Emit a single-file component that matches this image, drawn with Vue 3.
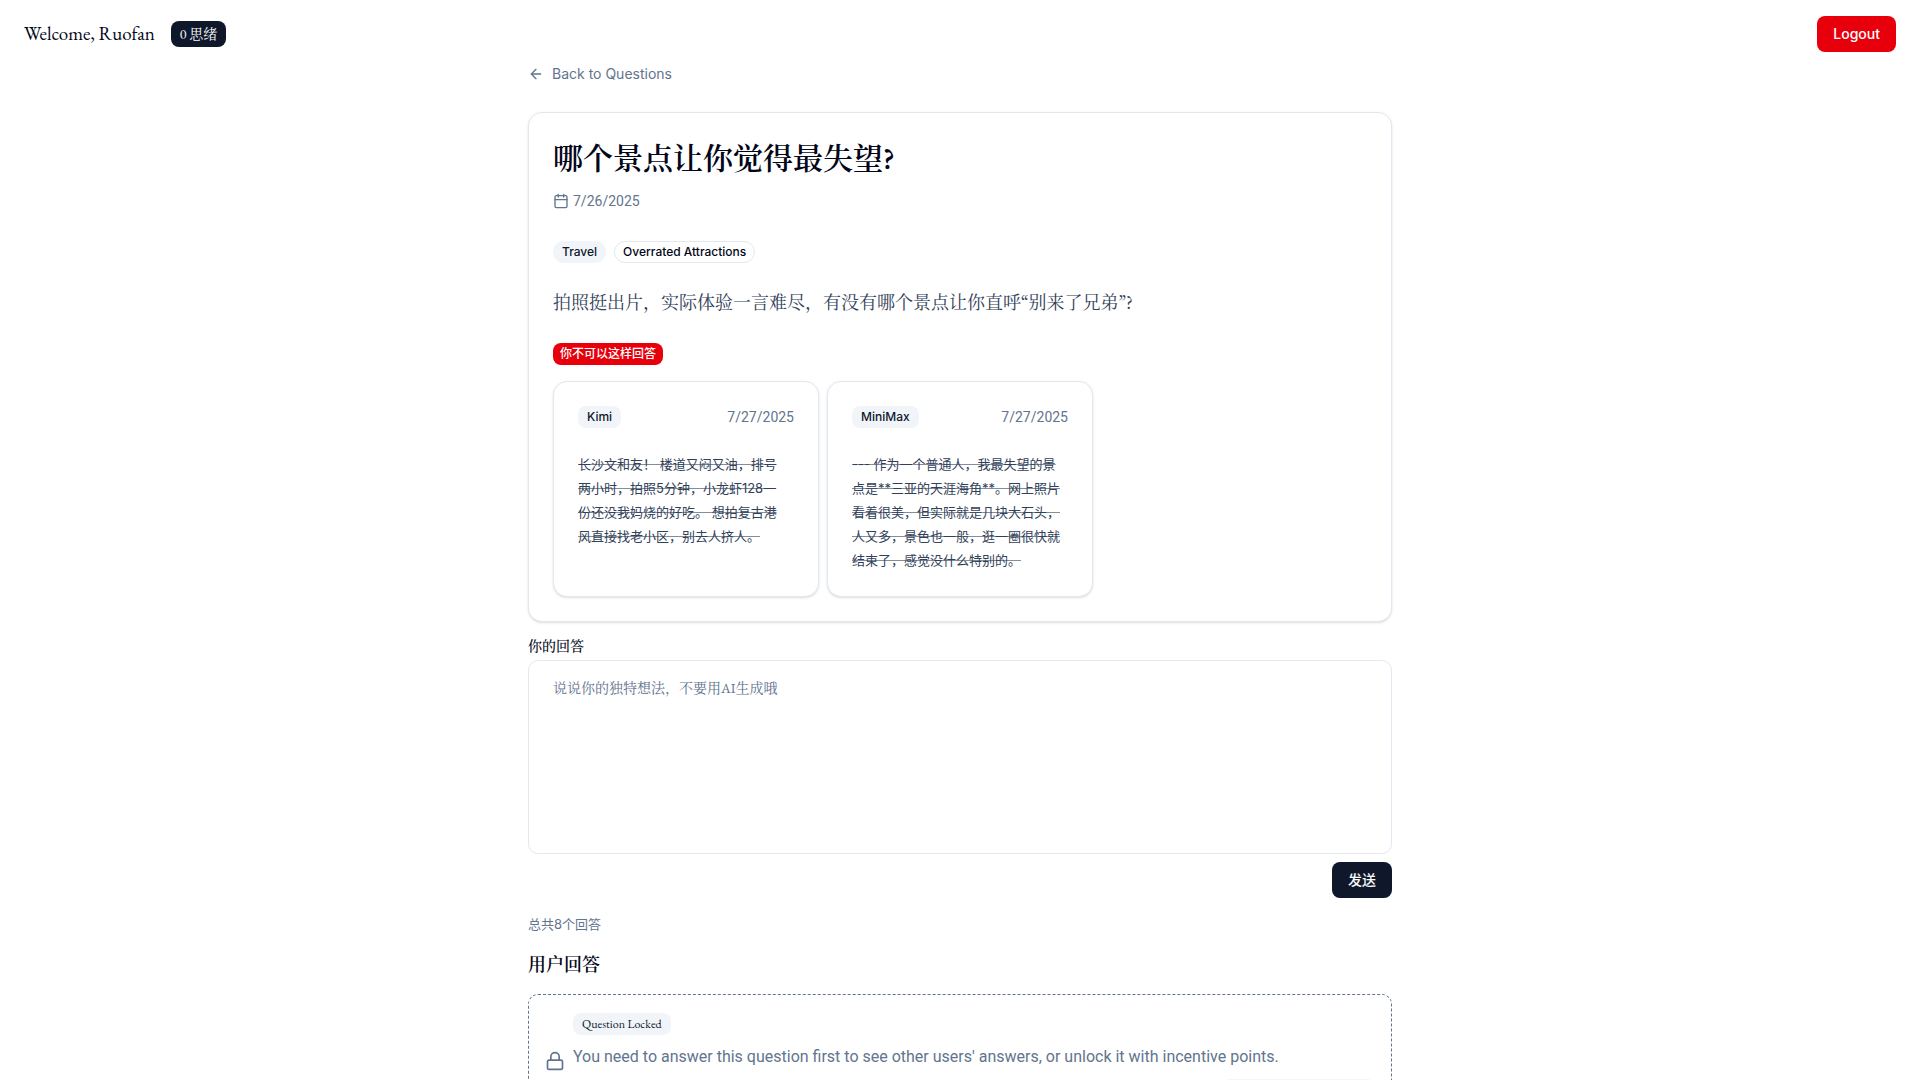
<script setup>
import { ref } from 'vue'

const answer = ref('')

const samples = [
  {
    model: 'Kimi',
    date: '7/27/2025',
    lines: [
      '长沙文和友！ 楼道又闷又油，排号',
      '两小时，拍照5分钟，小龙虾128一',
      '份还没我妈烧的好吃。 想拍复古港',
      '风直接找老小区，别去人挤人。',
    ],
  },
  {
    model: 'MiniMax',
    date: '7/27/2025',
    lines: [
      '--- 作为一个普通人，我最失望的景',
      '点是**三亚的天涯海角**。网上照片',
      '看着很美，但实际就是几块大石头，',
      '人又多，景色也一般，逛一圈很快就',
      '结束了，感觉没什么特别的。',
    ],
  },
]
</script>

<template>
  <div class="page">
    <header class="topbar">
      <div class="user">
        <span class="welcome">Welcome, Ruofan</span>
        <span class="points">0 思绪</span>
      </div>
      <button type="button" class="btn btn-danger">Logout</button>
    </header>

    <main class="content">
      <a href="#" class="back">
        <svg class="icon-sm" viewBox="0 0 24 24" aria-hidden="true">
          <path d="m12 19-7-7 7-7" />
          <path d="M19 12H5" />
        </svg>
        <span>Back to Questions</span>
      </a>

      <article class="card">
        <h1 class="title">哪个景点让你觉得最失望?</h1>
        <div class="meta">
          <svg class="icon-sm" viewBox="0 0 24 24" aria-hidden="true">
            <path d="M8 2v4" />
            <path d="M16 2v4" />
            <rect width="18" height="18" x="3" y="4" rx="2" />
            <path d="M3 10h18" />
          </svg>
          <time class="date" datetime="2025-07-26">7/26/2025</time>
        </div>
        <div class="tags">
          <span class="badge pill soft">Travel</span>
          <span class="badge pill outline">Overrated Attractions</span>
        </div>
        <p class="desc">拍照挺出片，实际体验一言难尽，有没有哪个景点让你直呼“别来了兄弟”?</p>
        <span class="badge danger">你不可以这样回答</span>

        <div class="samples">
          <section v-for="s in samples" :key="s.model" class="sample">
            <div class="sample-head">
              <span class="badge soft">{{ s.model }}</span>
              <time class="date" datetime="2025-07-27">{{ s.date }}</time>
            </div>
            <p class="sample-text">
              <del v-for="line in s.lines" :key="line">{{ line }}</del>
            </p>
          </section>
        </div>
      </article>

      <form class="answer" @submit.prevent>
        <label for="answer" class="answer-label">你的回答</label>
        <textarea
          id="answer"
          v-model="answer"
          class="answer-input"
          placeholder="说说你的独特想法，不要用AI生成哦"
        ></textarea>
        <button type="submit" class="btn btn-primary">发送</button>
      </form>

      <p class="total">总共8个回答</p>
      <h2 class="subtitle">用户回答</h2>

      <section class="locked">
        <svg class="icon-md" viewBox="0 0 24 24" aria-hidden="true">
          <rect width="18" height="11" x="3" y="11" rx="2" />
          <path d="M7 11V7a5 5 0 0 1 10 0v4" />
        </svg>
        <div class="locked-body">
          <span class="badge soft serif">Question Locked</span>
          <p class="locked-text">
            You need to answer this question first to see other users' answers, or unlock it with incentive points.
          </p>
          <button type="button" class="btn btn-outline" aria-label="Unlock question"></button>
        </div>
      </section>
    </main>
  </div>
</template>

<style>
body {
  margin: 0;
  background: #fff;
}
</style>

<style scoped>
.page {
  --sans: Inter, "Noto Sans CJK SC", sans-serif;
  --narrow: Roboto, "Noto Sans CJK SC", sans-serif;
  --serif: "EB Garamond", "Liberation Serif", "Noto Serif CJK SC", "Noto Sans CJK SC", serif;
  --ink: #020618;
  --navy: #0f172b;
  --slate: #314158;
  --muted: #62748e;
  --line: #e2e8f0;
  --soft: #f1f5f9;
  --red: #e7000b;
  color: var(--ink);
  font-family: var(--sans);
  font-size: 14px;
  line-height: 20px;
}

.page * {
  box-sizing: border-box;
}

h1,
h2,
p {
  margin: 0;
}

svg {
  flex: none;
  fill: none;
  stroke: currentColor;
  stroke-width: 2;
  stroke-linecap: round;
  stroke-linejoin: round;
}

.icon-sm {
  width: 16px;
  height: 16px;
}

.icon-md {
  width: 20px;
  height: 20px;
}

.topbar {
  display: flex;
  align-items: center;
  justify-content: space-between;
  padding: 16px 24px 12px;
}

.user {
  display: flex;
  align-items: center;
  gap: 16px;
}

.welcome {
  font-family: var(--serif);
  font-size: 19px;
  line-height: 28px;
}

.points {
  padding: 3px 9px;
  border-radius: 8px;
  background: var(--navy);
  color: #f8fafc;
  font-family: var(--serif);
}

.btn {
  height: 36px;
  padding: 0 16px;
  border: 0;
  border-radius: 8px;
  font-family: var(--sans);
  font-size: 14px;
  font-weight: 500;
  line-height: 20px;
  cursor: pointer;
}

.btn-danger {
  background: var(--red);
  color: #fff;
}

.btn-primary {
  background: var(--navy);
  color: #f8fafc;
}

.btn-outline {
  align-self: flex-end;
  width: 152px;
  height: 32px;
  border: 1px solid var(--soft);
  background: #fff;
  color: var(--ink);
}

.content {
  box-sizing: border-box;
  max-width: 896px;
  margin: 0 auto;
  padding: 0 16px 32px;
}

.back {
  display: flex;
  align-items: center;
  gap: 8px;
  width: fit-content;
  margin-bottom: 28px;
  color: var(--muted);
  text-decoration: none;
}

.card,
.sample {
  padding: 24px;
  border: 1px solid var(--line);
  border-radius: 14px;
  background: #fff;
  box-shadow: 0 1px 3px rgba(0, 0, 0, 0.1), 0 1px 2px -1px rgba(0, 0, 0, 0.1);
}

.title {
  font-family: var(--serif);
  font-size: 30px;
  font-weight: 600;
  line-height: 44px;
}

.meta {
  display: flex;
  align-items: center;
  gap: 4px;
  margin-top: 10px;
  color: var(--muted);
}

.date {
  color: var(--muted);
  font-family: var(--narrow);
}

.tags {
  display: flex;
  gap: 8px;
  margin-top: 30px;
}

.badge {
  display: block;
  width: fit-content;
  padding: 2px 8px;
  border: 1px solid transparent;
  border-radius: 8px;
  font-size: 12px;
  font-weight: 500;
  line-height: 16px;
}

.pill {
  border-radius: 11px;
}

.soft {
  background: var(--soft);
  color: var(--navy);
}

.outline {
  border-color: var(--line);
}

.danger {
  margin-top: 26px;
  padding: 2px 6px;
  background: var(--red);
  color: #fff;
}

.serif {
  font-family: var(--serif);
  font-weight: 400;
}

.desc {
  margin-top: 26px;
  color: var(--slate);
  font-family: var(--serif);
  font-size: 18px;
  line-height: 28px;
}

.samples {
  display: grid;
  grid-template-columns: repeat(3, minmax(0, 1fr));
  gap: 8px;
  margin-top: 16px;
}

.sample-head {
  display: flex;
  align-items: center;
  justify-content: space-between;
}

.sample-text {
  margin-top: 24px;
  color: var(--slate);
  font-size: 13px;
  line-height: 24px;
  white-space: nowrap;
}

.sample-text del {
  display: block;
  text-decoration-color: rgba(49, 65, 88, 0.6);
}

.answer {
  display: flex;
  flex-direction: column;
  margin-top: 14px;
}

.answer-label {
  font-family: var(--serif);
  font-weight: 500;
}

.answer-input {
  height: 194px;
  margin: 4px 0 8px;
  padding: 16px 24px;
  border: 1px solid var(--line);
  border-radius: 10px;
  background: #fff;
  color: var(--ink);
  font-family: var(--serif);
  font-size: 14px;
  line-height: 22px;
  resize: none;
}

.answer-input::placeholder {
  color: var(--muted);
  opacity: 1;
}

.btn-primary {
  align-self: flex-end;
}

.total {
  margin-top: 16px;
  color: var(--muted);
  font-size: 13px;
}

.subtitle {
  margin-top: 16px;
  font-family: var(--serif);
  font-size: 18px;
  font-weight: 600;
  line-height: 30px;
}

.locked {
  display: flex;
  align-items: center;
  gap: 8px;
  margin-top: 14px;
  padding: 16px;
  border: 1px dashed var(--muted);
  border-radius: 10px;
  color: var(--muted);
}

.locked-body {
  display: flex;
  flex: 1;
  flex-direction: column;
  padding-top: 2px;
}

.locked-text {
  margin: 10px 0;
  font-family: var(--narrow);
  font-size: 16px;
  line-height: 24px;
}
</style>
